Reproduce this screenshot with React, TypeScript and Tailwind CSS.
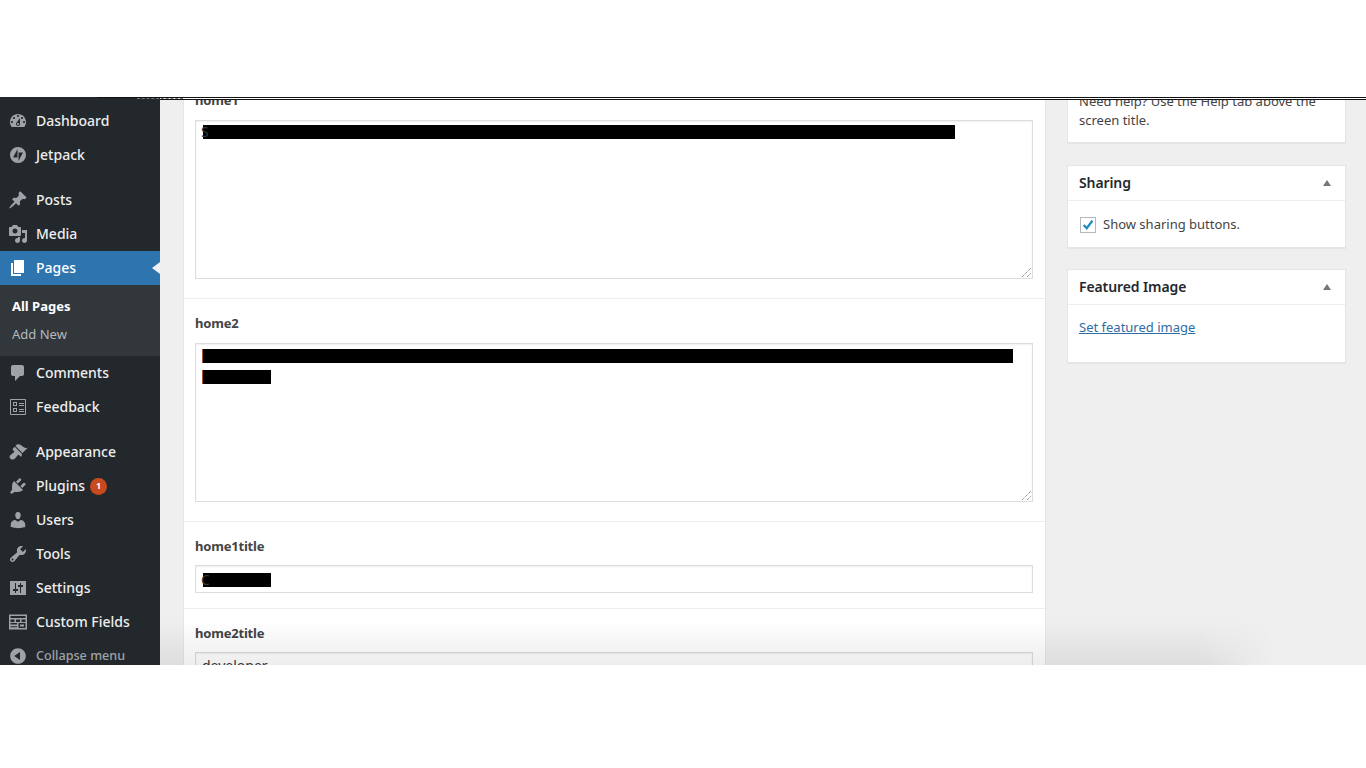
const sans = "font-['Noto_Sans','Open_Sans',sans-serif]";

type MenuIcon = { name: string; path: string; badge?: string; muted?: boolean };

const icons = {
  dashboard:
    "M3.76 16h12.48c1.1-1.37 1.76-3.11 1.76-5 0-4.42-3.58-8-8-8s-8 3.58-8 8c0 1.89.66 3.63 1.76 5zM10 4c.55 0 1 .45 1 1s-.45 1-1 1-1-.45-1-1 .45-1 1-1zM6 6c.55 0 1 .45 1 1s-.45 1-1 1-1-.45-1-1 .45-1 1-1zm8 0c.55 0 1 .45 1 1s-.45 1-1 1-1-.45-1-1 .45-1 1-1zm-5.37 5.55L12 7v6c0 1.1-.9 2-2 2s-2-.9-2-2c0-.57.24-1.08.63-1.45zM4 10c.55 0 1 .45 1 1s-.45 1-1 1-1-.45-1-1 .45-1 1-1zm12 0c.55 0 1 .45 1 1s-.45 1-1 1-1-.45-1-1 .45-1 1-1zm-5 3c0-.55-.45-1-1-1s-1 .45-1 1 .45 1 1 1 1-.45 1-1z",
  jetpack:
    "M10 2a8 8 0 1 0 0 16 8 8 0 0 0 0-16zM9.5 4v8.5H5zM10.5 16V7.5H15z",
  posts:
    "M10.44 3.02l1.82-1.82 6.36 6.35-1.83 1.82c-1.05-.68-2.48-.57-3.41.36l-.75.75c-.92.93-1.04 2.35-.35 3.41l-1.83 1.82-2.41-2.41-2.8 2.79c-.42.42-3.38 2.71-3.8 2.29s1.86-3.39 2.28-3.81l2.79-2.79L4.1 9.36l1.83-1.82c1.05.69 2.48.57 3.4-.36l.75-.75c.93-.92 1.05-2.35.36-3.41z",
  media:
    "M13 11V4c0-.55-.45-1-1-1h-1.67L9 1H5L3.67 3H2c-.55 0-1 .45-1 1v7c0 .55.45 1 1 1h10c.55 0 1-.45 1-1zM7 4.5c1.38 0 2.5 1.12 2.5 2.5S8.38 9.5 7 9.5 4.5 8.38 4.5 7 5.62 4.5 7 4.5zM14 6h5v10.5c0 1.38-1.12 2.5-2.5 2.5S14 17.88 14 16.5s1.12-2.5 2.5-2.5c.17 0 .34.02.5.05V9h-3V6zm-4 8.05V13h2v3.5c0 1.38-1.12 2.5-2.5 2.5S7 17.88 7 16.5 8.12 14 9.5 14c.17 0 .34.02.5.05z",
  pages: "M6 15V2h10v13H6zm-1 1h8v2H3V5h2v11z",
  comments:
    "M5 2h9c1.1 0 2 .9 2 2v7c0 1.1-.9 2-2 2h-2l-5 5v-5H5c-1.1 0-2-.9-2-2V4c0-1.1.9-2 2-2z",
  feedback:
    "M3 2h14c.55 0 1 .45 1 1v14c0 .55-.45 1-1 1H3c-.55 0-1-.45-1-1V3c0-.55.45-1 1-1zm0 1v14h14V3H3zm2 2h4v4H5V5zm1 1v2h2V6H6zm5 0h5v1h-5V6zm0 2h5v1h-5V8zm-6 3h4v4H5v-4zm1 1v2h2v-2H6zm5 0h5v1h-5v-1zm0 2h5v1h-5v-1z",
  appearance:
    "M14.48 11.06L7.41 3.99l1.5-1.5c.5-.56 2.3-.47 3.51.32 1.21.8 1.43 1.28 2.91 2.1 1.18.64 2.45 1.26 4.45.85zm-.71.71L6.7 4.7 4.93 6.47c-.39.39-.39 1.02 0 1.41l1.06 1.06c.39.39.39 1.03 0 1.42-.6.6-1.43 1.11-2.21 1.69-.35.26-.7.53-1.01.84C1.43 13.23.99 15.15 2.49 16.65c1.5 1.5 3.42 1.06 4.76-.28.31-.31.58-.66.84-1.01.58-.78 1.09-1.61 1.69-2.21.39-.39 1.03-.39 1.42 0l1.06 1.06c.39.39 1.02.39 1.41 0z",
  plugins:
    "M13.11 4.36L9.87 7.6 8 5.73l3.24-3.24c.35-.34 1.05-.2 1.56.32.52.51.66 1.21.31 1.55zm-8 1.77l.91-1.12 9.01 9.01-1.19.84c-.71.71-2.63 1.16-3.82 1.16H6.14L4.9 17.26c-.59.59-1.54.59-2.12 0-.59-.58-.59-1.53 0-2.12l1.24-1.24v-3.88c0-1.13.4-3.19 1.09-3.89zm7.26 3.97l3.24-3.24c.34-.35 1.04-.21 1.55.31.52.51.66 1.21.31 1.55l-3.24 3.25z",
  users:
    "M10 9.25c-2.27 0-2.73-3.44-2.73-3.44C7 4.02 7.82 2 9.97 2c2.16 0 2.98 2.02 2.71 3.81 0 0-.41 3.44-2.68 3.44zm0 2.57L12.72 10c2.39 0 4.52 2.33 4.52 4.53v2.49s-3.65 1.13-7.24 1.13c-3.65 0-7.24-1.13-7.24-1.13v-2.49c0-2.25 1.94-4.48 4.47-4.48z",
  tools:
    "M16.68 9.77c-1.34 1.34-3.3 1.67-4.95.99l-5.41 6.52c-.99.99-2.59.99-3.58 0s-.99-2.59 0-3.57l6.52-5.42c-.68-1.65-.35-3.61.99-4.95 1.28-1.28 3.12-1.62 4.72-1.06l-2.89 2.89 2.82 2.82 2.86-2.87c.53 1.58.18 3.39-1.08 4.65zM3.81 16.21c.4.39 1.04.39 1.43 0 .4-.4.4-1.04 0-1.43-.39-.4-1.03-.4-1.43 0-.39.39-.39 1.03 0 1.43z",
  settings:
    "M2 3h16v14H2zM7 5h1v6h2v2H8v2H7v-2H5v-2h2zM12 5h1v2h2v2h-2v6h-1V9h-2V7h2z",
  fields:
    "M1 2.5h18v15H1v-15zm1.5 1.5v2h15V4h-15zm0 3.5V10h4V7.5h-4zm5.5 0V10h4V7.5H8zm5.5 0V10h4V7.5h-4zM2.5 11v1.5h6.5V11H2.5zm8 0v5h7v-5h-7zm1.5 1.5h4v2h-4v-2zM2.5 14v.8h6.5V14H2.5zm0 1.8v.2h6.5v-.2H2.5z",
  collapse:
    "M10 2.16c4.33 0 7.84 3.51 7.84 7.84s-3.51 7.84-7.84 7.84S2.16 14.33 2.16 10 5.71 2.16 10 2.16zm2 11.72V6.12L6.18 9.97z",
};

function Icon({ path, active }: { path: string; active?: boolean }) {
  return (
    <svg viewBox="0 0 20 20" className={`h-5 w-5 shrink-0 fill-current ${active ? "text-white" : "text-[#9ea3a8]"}`}>
      <path d={path} fillRule="evenodd" />
    </svg>
  );
}

function MenuItem({ name, path, active, badge, muted }: MenuIcon & { active?: boolean }) {
  return (
    <div className={`relative flex h-[34px] items-center pl-[8px] ${active ? "bg-[#2e74ae]" : ""}`}>
      <Icon path={path} active={active} />
      <span
        className={`ml-[8px] font-medium ${muted ? "mt-[1px] text-[12.6px] text-[#9ea3a8]" : "mb-[2px] text-[14px] text-[#eee]"} ${active ? "text-white" : ""}`}
      >
        {name}
      </span>
      {badge ? (
        <span className="ml-[5px] flex h-[17px] w-[17px] items-center justify-center rounded-full bg-[#ca4a1f] text-[9px] font-bold text-white">
          {badge}
        </span>
      ) : null}
      {active ? (
        <span className="absolute right-0 top-[11px] h-0 w-0 border-y-[6px] border-r-[8px] border-y-transparent border-r-[#f1f1f1]" />
      ) : null}
    </div>
  );
}

function Sidebar() {
  return (
    <aside className="w-[160px] shrink-0 bg-[#23282d] pt-[7px]">
      <MenuItem name="Dashboard" path={icons.dashboard} />
      <MenuItem name="Jetpack" path={icons.jetpack} />
      <div className="h-[11px]" />
      <MenuItem name="Posts" path={icons.posts} />
      <MenuItem name="Media" path={icons.media} />
      <MenuItem name="Pages" path={icons.pages} active />
      <div className="h-[71px] bg-[#32373c] pl-[12px] pt-[7px] text-[13px]">
        <div className="h-[28px] font-bold leading-[28px] text-white">All Pages</div>
        <div className="h-[28px] leading-[28px] text-[#b4b9be]">Add New</div>
      </div>
      <MenuItem name="Comments" path={icons.comments} />
      <MenuItem name="Feedback" path={icons.feedback} />
      <div className="h-[11px]" />
      <MenuItem name="Appearance" path={icons.appearance} />
      <MenuItem name="Plugins" path={icons.plugins} badge="1" />
      <MenuItem name="Users" path={icons.users} />
      <MenuItem name="Tools" path={icons.tools} />
      <MenuItem name="Settings" path={icons.settings} />
      <MenuItem name="Custom Fields" path={icons.fields} />
      <MenuItem name="Collapse menu" path={icons.collapse} muted />
    </aside>
  );
}

function ResizeGrip() {
  return (
    <svg viewBox="0 0 9 9" className="absolute bottom-[1px] right-[1px] h-[9px] w-[9px] stroke-[#666]">
      <path d="M0 9L9 0M5 9L9 5" strokeWidth="1" strokeDasharray="1 1" />
    </svg>
  );
}

function FieldLabel({ children }: { children: string }) {
  return <div className="h-[19px] text-[13px] font-bold leading-[19px] tracking-[-0.2px] text-[#444]">{children}</div>;
}

// black bars scribbled over the field text, the first letter still shows at the left
function Redact({ width, sliver, peek }: { width: string; sliver?: boolean; peek?: string }) {
  return (
    <div className={`relative h-[14px] bg-black ${width} ${sliver ? "border-l border-l-[#a5502e]" : ""}`}>
      {peek ? (
        <span className="absolute left-[-2px] top-[-2px] text-[14px] leading-[18px] text-[#32373c]">{peek}</span>
      ) : null}
    </div>
  );
}

function MainPanel() {
  return (
    <div className="ml-[23px] mt-[-9px] w-[863px] shrink-0 self-start border-x border-[#e5e5e5] bg-white">
      <div className="h-[208px] border-b border-[#eee] pl-[11px] pr-[12px]">
        <FieldLabel>home1</FieldLabel>
        <div className="relative mt-[10px] h-[159px] border border-[#ddd] pl-[7px] pt-[4px] shadow-[inset_0_1px_2px_rgba(0,0,0,0.07)]">
          <Redact width="w-[752px]" peek="S" />
          <ResizeGrip />
        </div>
      </div>
      <div className="h-[223px] border-b border-[#eee] pl-[11px] pr-[12px] pt-[15px]">
        <FieldLabel>home2</FieldLabel>
        <div className="relative mt-[10px] h-[159px] border border-[#ddd] pl-[6px] pt-[5px] shadow-[inset_0_1px_2px_rgba(0,0,0,0.07)]">
          <Redact width="w-[811px]" sliver />
          <div className="mt-[7px]">
            <Redact width="w-[69px]" sliver />
          </div>
          <ResizeGrip />
        </div>
      </div>
      <div className="h-[87px] border-b border-[#eee] pl-[11px] pr-[12px] pt-[15px]">
        <FieldLabel>home1title</FieldLabel>
        <div className="mt-[9px] h-[28px] border border-[#ddd] pl-[7px] pt-[7px] shadow-[inset_0_1px_2px_rgba(0,0,0,0.07)]">
          <Redact width="w-[68px]" peek="C" />
        </div>
      </div>
      <div className="pl-[11px] pr-[12px] pt-[15px]">
        <FieldLabel>home2title</FieldLabel>
        <div className="mt-[9px] h-[28px] border border-[#ddd] bg-white pl-[6px] text-[14px] leading-[26px] text-[#32373c] shadow-[inset_0_1px_2px_rgba(0,0,0,0.07)]">
          developer
        </div>
      </div>
    </div>
  );
}

function BoxHead({ title }: { title: string }) {
  return (
    <div className="flex h-[35px] items-center justify-between border-b border-[#eee] pl-[11px] pr-[14px]">
      <span className="mb-[2px] text-[14px] font-semibold tracking-[-0.1px] text-[#23282d]">{title}</span>
      <span className="h-0 w-0 border-x-[4px] border-b-[6px] border-x-transparent border-b-[#72777c]" />
    </div>
  );
}

function SideColumn() {
  return (
    <div className="ml-[21px] mt-[-10px] flex w-[279px] shrink-0 flex-col gap-[21px] self-start text-[13px] text-[#444]">
      <div className="h-[53px] border border-[#e5e5e5] bg-white pl-[11px] pr-[12px] pt-[1px] leading-[19px] shadow-[0_1px_1px_rgba(0,0,0,0.04)]">
        Need help? Use the Help tab above the screen title.
      </div>
      <div className="mt-[1px] h-[83px] border border-[#e5e5e5] bg-white shadow-[0_1px_1px_rgba(0,0,0,0.04)]">
        <BoxHead title="Sharing" />
        <label className="flex items-center pl-[12px] pt-[14px]">
          <span className="flex h-[16px] w-[16px] items-center justify-center border border-[#b4b9be] bg-white">
            <svg viewBox="0 0 16 16" className="h-[14px] w-[14px] fill-none stroke-[#1e8cbe]">
              <path d="M3 8l3.6 3.6L13 3" strokeWidth="2.6" />
            </svg>
          </span>
          <span className="ml-[7px]">Show sharing buttons.</span>
        </label>
      </div>
      <div className="h-[94px] border border-[#e5e5e5] bg-white shadow-[0_1px_1px_rgba(0,0,0,0.04)]">
        <BoxHead title="Featured Image" />
        <div className="pl-[11px] pt-[13px]">
          <a className="text-[#2e6da4] underline">Set featured image</a>
        </div>
      </div>
    </div>
  );
}

export default function App() {
  return (
    <div className={`h-screen w-full overflow-hidden bg-white pt-[97px] ${sans}`}>
      <div className="relative flex h-[568px] overflow-hidden bg-[#efefef]">
        <Sidebar />
        <div className="flex min-w-0 flex-1 pt-[3px]">
          <MainPanel />
          <SideColumn />
        </div>
        {/* the stray rules and the fade left in the capture */}
        <div className="absolute left-[97px] right-0 top-0 h-[1px] bg-[#111]" />
        <div className="absolute left-[160px] right-0 top-[1px] h-[1px] bg-white" />
        <div className="absolute left-[160px] right-0 top-[2px] h-[1px] bg-[#111]" />
        <div className="absolute left-[137px] top-[1px] h-[1px] w-[46px] border-t border-dashed border-[#777]" />
        <div className="absolute right-0 top-[-1px] h-[1px] w-[39px] border-t border-dashed border-[#777]" />
        <div className="absolute bottom-0 left-[160px] h-[45px] w-[1115px] bg-gradient-to-b from-transparent to-black/[0.07] [mask-image:linear-gradient(to_right,black_93%,transparent)]" />
      </div>
    </div>
  );
}
